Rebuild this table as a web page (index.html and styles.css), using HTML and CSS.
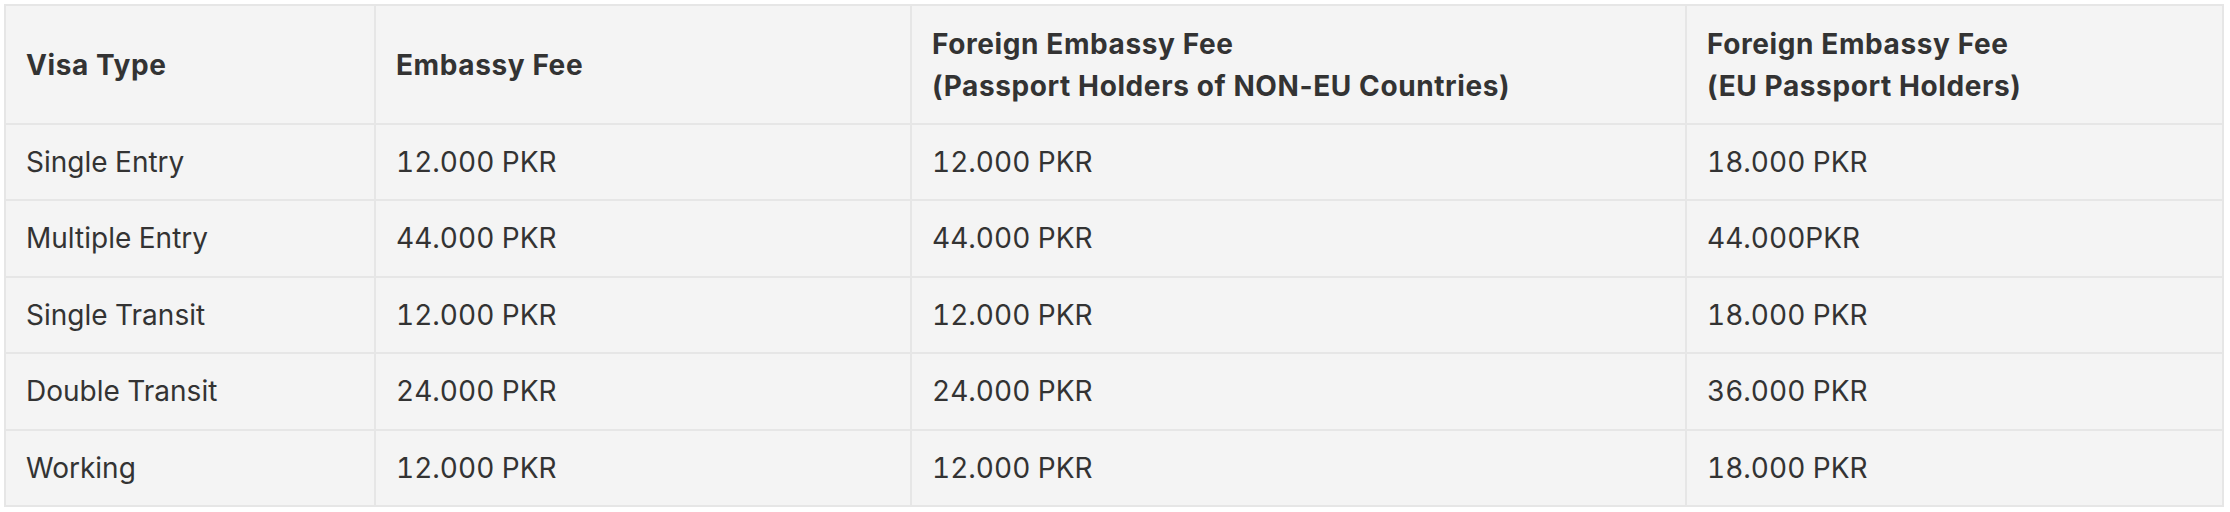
FILE: index.html
```html
<!DOCTYPE html>
<html lang="en">
<head>
<meta charset="utf-8">
<title>Visa Fees</title>
<link rel="stylesheet" href="styles.css">
</head>
<body>
<table class="fees">
  <colgroup>
    <col class="c1">
    <col class="c2">
    <col class="c3">
    <col class="c4">
  </colgroup>
  <thead>
    <tr>
      <th>Visa Type</th>
      <th>Embassy Fee</th>
      <th>Foreign Embassy Fee<br>(Passport Holders of NON-EU Countries)</th>
      <th>Foreign Embassy Fee<br>(EU Passport Holders)</th>
    </tr>
  </thead>
  <tbody>
    <tr><td>Single Entry</td><td>12.000 PKR</td><td>12.000 PKR</td><td>18.000 PKR</td></tr>
    <tr><td>Multiple Entry</td><td>44.000 PKR</td><td>44.000 PKR</td><td>44.000PKR</td></tr>
    <tr><td>Single Transit</td><td>12.000 PKR</td><td>12.000 PKR</td><td>18.000 PKR</td></tr>
    <tr><td>Double Transit</td><td>24.000 PKR</td><td>24.000 PKR</td><td>36.000 PKR</td></tr>
    <tr><td>Working</td><td>12.000 PKR</td><td>12.000 PKR</td><td>18.000 PKR</td></tr>
  </tbody>
</table>
</body>
</html>
```
FILE: styles.css
```css
html, body {
  background: #ffffff;
}
body {
  margin: 4px;
  font-family: Inter, "Liberation Sans", sans-serif;
  color: #333333;
}
.fees {
  table-layout: fixed;
  width: 2220px;
  border-collapse: separate;
  border-spacing: 0;
  background: #f4f4f4;
  border-top: 2px solid #e6e6e6;
  border-left: 2px solid #e6e6e6;
}
.c1 { width: 370px; }
.c2 { width: 536px; }
.c3 { width: 775px; }
.c4 { width: 537px; }
.fees th,
.fees td {
  text-align: left;
  vertical-align: middle;
  font-size: 28px;
  line-height: 42px;
  padding: 16px 20px;
  border-right: 2px solid #e6e6e6;
  border-bottom: 2px solid #e6e6e6;
}
.fees th {
  font-weight: 700;
  letter-spacing: 0.6px;
  height: 85px;
}
.fees td {
  font-weight: 400;
  font-variant-numeric: tabular-nums;
  padding-bottom: 16.4px;
}
```
